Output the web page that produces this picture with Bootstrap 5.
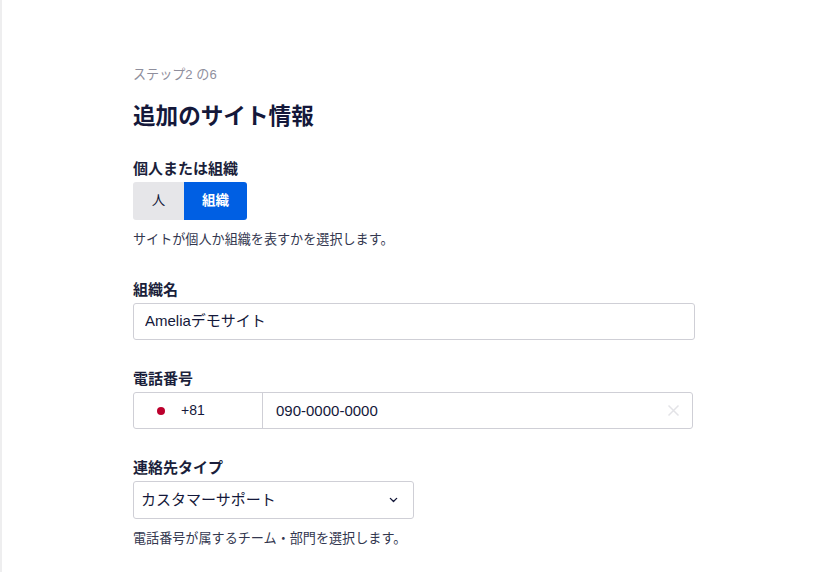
<!DOCTYPE html>
<html lang="ja">
<head>
    <meta charset="UTF-8">
    <meta name="viewport" content="width=device-width, initial-scale=1.0">
    <title>追加のサイト情報</title>
    <link rel="stylesheet" href="https://cdn.jsdelivr.net/npm/bootstrap@5.3.0/dist/css/bootstrap.min.css">
    <style>
        html, body {
            height: 100%;
            overflow: hidden;
        }
        body {
            font-family: "Liberation Sans", "Noto Sans CJK JP", sans-serif;
            color: #1b1f3b;
            background-color: #fff;
        }
        .page-wrap {
            min-height: 100%;
            border-left: 2px solid #eeeeef;
            padding: 66px 0 0 131px;
        }
        .form-wrap {
            width: 562px;
        }
        .step-text {
            font-size: 13.1px;
            line-height: 18px;
            color: #8f8f9d;
            margin-bottom: 17px;
        }
        .page-title {
            font-size: 22.6px;
            line-height: 32px;
            font-weight: 700;
            margin-bottom: 25px;
            color: #14183a;
        }
        .field-label {
            display: block;
            font-size: 15px;
            line-height: 22px;
            font-weight: 700;
            margin-bottom: 2px;
        }
        .field-group {
            padding-bottom: 28px;
        }
        .help-text {
            font-size: 13.1px;
            line-height: 20px;
            margin: 10px 0 1px;
            color: #33374f;
        }
        .type-toggle .btn {
            height: 38px;
            font-size: 13.5px;
            font-weight: 700;
            border: 0;
            border-radius: 3px;
            padding: 0;
        }
        .type-toggle .toggle-off {
            width: 51px;
            background-color: #e6e6e9;
            color: #14183a;
            border-top-right-radius: 0;
            border-bottom-right-radius: 0;
            font-weight: 400;
        }
        .type-toggle .toggle-on {
            width: 63px;
            background-color: #005fe3;
            color: #fff;
            border-top-left-radius: 0;
            border-bottom-left-radius: 0;
        }
        .text-field {
            height: 37px;
            font-size: 15px;
            padding: 0 11px 5px;
            border: 1px solid #cfcfd6;
            border-radius: 3px;
            color: #14183a;
        }
        .phone-box {
            width: 560px;
            height: 37px;
            border: 1px solid #cfcfd6;
            border-radius: 3px;
            font-size: 14px;
            color: #14183a;
        }
        .phone-code {
            width: 129px;
            padding-left: 23px;
            border-right: 1px solid #cfcfd6;
            gap: 16px;
        }
        .flag-dot {
            width: 8px;
            height: 8px;
            border-radius: 50%;
            background-color: #bc002d;
        }
        .phone-input {
            border: 0;
            outline: 0;
            padding: 0 13px;
            min-width: 0;
            font-size: 15px;
            color: inherit;
            background: transparent;
        }
        .clear-icon {
            margin-right: 12px;
        }
        .type-select {
            width: 281px;
            height: 38px;
            font-size: 15px;
            color: #14183a;
            padding: 0 30px 0 7px;
            border: 1px solid #cfcfd6;
            border-radius: 3px;
            background-image: url("data:image/svg+xml,%3csvg xmlns='http://www.w3.org/2000/svg' viewBox='0 0 10 6'%3e%3cpath fill='none' stroke='%2314183a' stroke-width='1.5' stroke-linecap='round' stroke-linejoin='round' d='M1.5 1.2 5 4.6l3.5-3.4'/%3e%3c/svg%3e");
            background-size: 9px 6px;
            background-position: right 15px center;
        }
    </style>
</head>
<body>
<div class="page-wrap">
    <div class="form-wrap">
        <div class="step-text">ステップ2 の6</div>
        <h1 class="page-title">追加のサイト情報</h1>

        <div class="field-group">
            <span class="field-label">個人または組織</span>
            <div class="type-toggle d-flex">
                <button type="button" class="btn toggle-off">人</button>
                <button type="button" class="btn toggle-on">組織</button>
            </div>
            <div class="help-text">サイトが個人か組織を表すかを選択します。</div>
        </div>

        <div class="field-group">
            <label class="field-label" for="org-name">組織名</label>
            <input id="org-name" type="text" class="form-control text-field" value="Ameliaデモサイト">
        </div>

        <div class="field-group">
            <label class="field-label" for="phone">電話番号</label>
            <div class="phone-box d-flex align-items-center">
                <div class="phone-code d-flex align-items-center h-100">
                    <span class="flag-dot"></span>
                    <span>+81</span>
                </div>
                <input id="phone" type="text" class="phone-input flex-grow-1 h-100" value="090-0000-0000">
                <svg class="clear-icon" width="13" height="13" viewBox="0 0 13 13">
                    <path d="M1.5 1.5l10 10M11.5 1.5l-10 10" stroke="#e3e3e7" stroke-width="1.5" fill="none"/>
                </svg>
            </div>
        </div>

        <div class="field-group">
            <label class="field-label" for="contact-type">連絡先タイプ</label>
            <select id="contact-type" class="form-select type-select">
                <option>カスタマーサポート</option>
            </select>
            <div class="help-text">電話番号が属するチーム・部門を選択します。</div>
        </div>
    </div>
</div>
<script src="https://cdn.jsdelivr.net/npm/bootstrap@5.3.0/dist/js/bootstrap.bundle.min.js"></script>
</body>
</html>
